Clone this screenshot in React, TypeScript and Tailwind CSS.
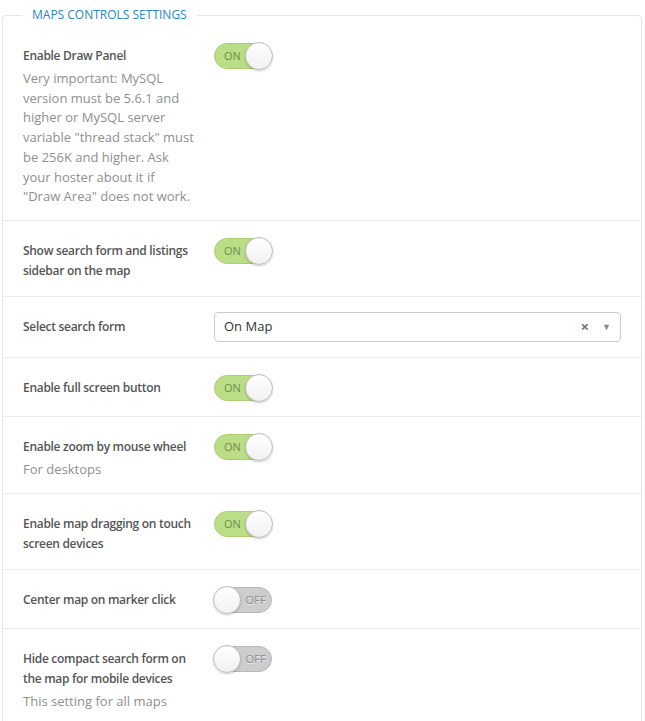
import { useState } from "react";

type Row = {
  label: string;
  desc?: string;
  kind: "toggle" | "select";
  on?: boolean;
};

const rows: Row[] = [
  {
    label: "Enable Draw Panel",
    desc: 'Very important: MySQL version must be 5.6.1 and higher or MySQL server variable "thread stack" must be 256K and higher. Ask your hoster about it if "Draw Area" does not work.',
    kind: "toggle",
    on: true,
  },
  { label: "Show search form and listings sidebar on the map", kind: "toggle", on: true },
  { label: "Select search form", kind: "select" },
  { label: "Enable full screen button", kind: "toggle", on: true },
  { label: "Enable zoom by mouse wheel", desc: "For desktops", kind: "toggle", on: true },
  { label: "Enable map dragging on touch screen devices", kind: "toggle", on: true },
  { label: "Center map on marker click", kind: "toggle", on: false },
  {
    label: "Hide compact search form on the map for mobile devices",
    desc: "This setting for all maps",
    kind: "toggle",
    on: false,
  },
];

const Toggle = ({ initial }: { initial: boolean }) => {
  const [on, setOn] = useState(initial);
  return (
    <button
      onClick={() => setOn(!on)}
      className={
        "relative mt-[2px] block h-[26px] w-[58px] rounded-full border leading-[24px] " +
        (on
          ? "border-[#a9cf73] bg-[#badd86] text-[11px] text-[#6f8f4c]"
          : "border-[#b9b9b9] bg-[#cdcdcd] text-[11.5px] text-[#8c8c8c] [text-shadow:0_1px_0_rgba(255,255,255,0.7)]")
      }
    >
      <span className={"absolute top-0 " + (on ? "left-[9px]" : "right-[5px]")}>{on ? "ON" : "OFF"}</span>
      <span
        className={
          "absolute -top-[2px] h-[28px] w-[28px] rounded-full border border-[#bcbcbc] bg-gradient-to-b from-white to-[#f1f1f1] shadow-[0_1px_2px_rgba(0,0,0,0.2)] " +
          (on ? "-right-[2px]" : "-left-[2px]")
        }
      />
    </button>
  );
};

const SearchSelect = () => (
  <div className="flex h-[30px] w-[407px] items-center rounded-[4px] border border-[#cccccc] bg-white pl-[9px] pr-[9px] text-[13px] text-[#333]">
    <span className="flex-1">On Map</span>
    <span className="mr-[13px] text-[15px] font-bold leading-none text-[#777]">×</span>
    <span className="text-[9px] text-[#888]">▼</span>
  </div>
);

export default function App() {
  return (
    <div className="bg-white pt-[4px] font-['Open_Sans',sans-serif]">
      <fieldset className="ml-[2px] w-[640px] rounded-[4px] border border-[#e6e6e6]">
        <legend className="ml-[19px] px-[10px] text-[12px] leading-[22px] text-[#2a88c0]">
          MAPS CONTROLS SETTINGS
        </legend>
        {rows.map((r, i) => (
          <div
            key={r.label}
            className={
              "flex items-start pb-[15px] pl-[20px] pr-[20px] pt-[15px] " +
              (i < rows.length - 1 ? "border-b border-[#ececec]" : "")
            }
          >
            <div className="w-[171px] pt-[5px]">
              <div className="text-[12px] font-semibold leading-[20px] tracking-[-0.3px] text-[#555]">{r.label}</div>
              {r.desc && (
                <div className="-mb-[2px] mt-[3px] text-[13px] leading-[19.7px] text-[#8f8f8f]">{r.desc}</div>
              )}
            </div>
            <div className="ml-[20px] flex">
              {r.kind === "toggle" ? <Toggle initial={!!r.on} /> : <SearchSelect />}
            </div>
          </div>
        ))}
      </fieldset>
    </div>
  );
}
